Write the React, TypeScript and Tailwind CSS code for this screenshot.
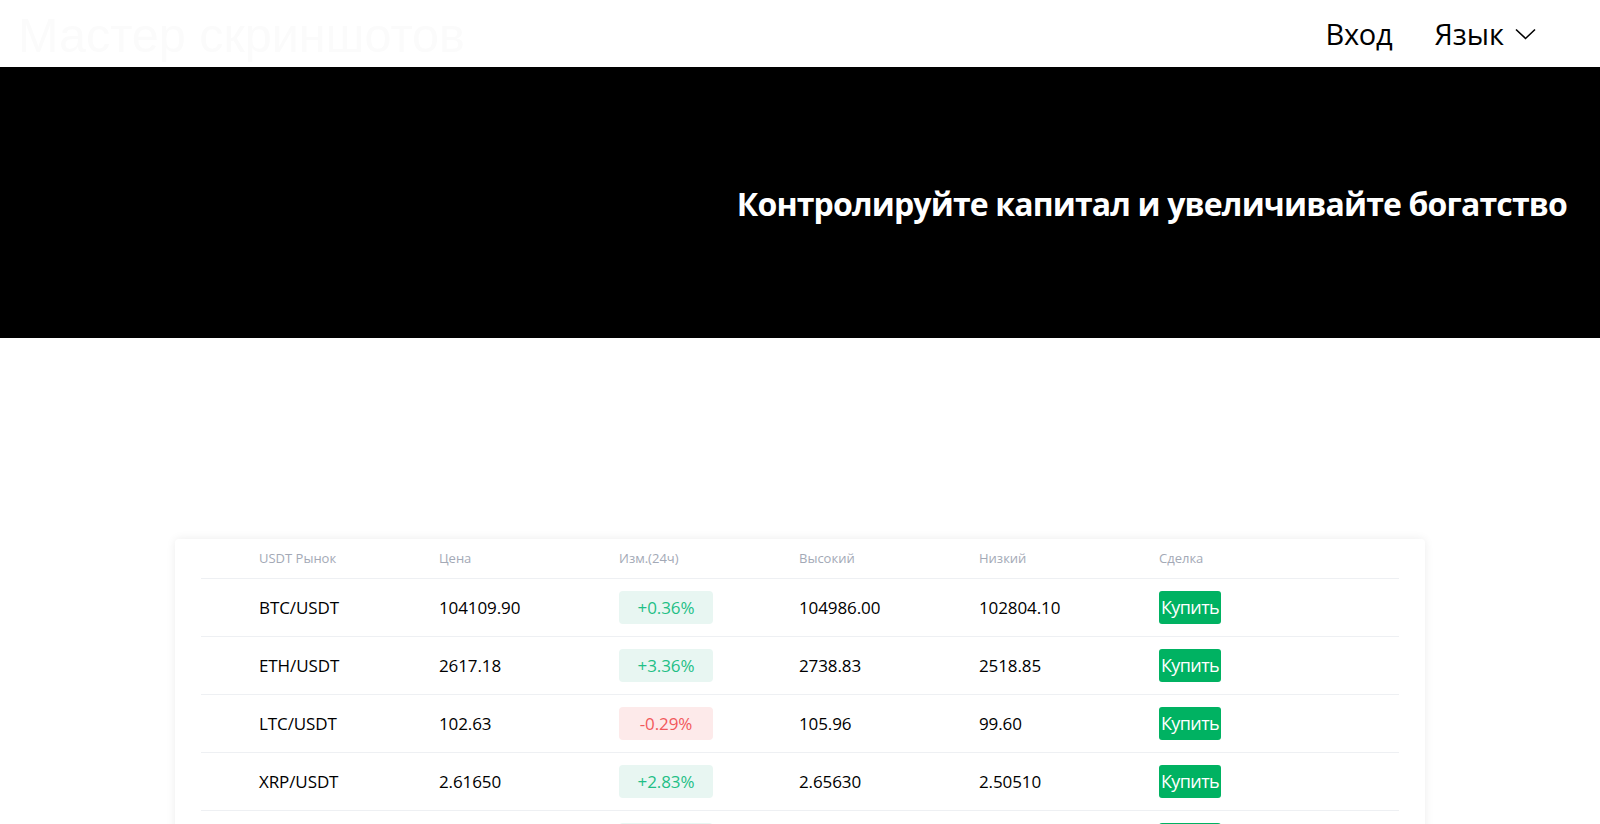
const rows = [
  { pair: "BTC/USDT", price: "104109.90", change: "+0.36%", high: "104986.00", low: "102804.10" },
  { pair: "ETH/USDT", price: "2617.18", change: "+3.36%", high: "2738.83", low: "2518.85" },
  { pair: "LTC/USDT", price: "102.63", change: "-0.29%", high: "105.96", low: "99.60" },
  { pair: "XRP/USDT", price: "2.61650", change: "+2.83%", high: "2.65630", low: "2.50510" },
  { pair: "EOS/USDT", price: "0.80500", change: "+1.12%", high: "0.82100", low: "0.78900" },
];

function ChevronDown() {
  return (
    <svg width="21" height="12" viewBox="0 0 21 12" fill="none" stroke="#000" strokeWidth="1.6">
      <path d="M1 1.5l9.5 9 9.5-9" />
    </svg>
  );
}

export default function App() {
  return (
    <div className="min-h-screen bg-white font-['Open_Sans',sans-serif] text-black">
      <header className="flex h-[67px] items-center justify-between pl-[18px] pr-[64px]">
        <div className="pt-[4px] font-['Liberation_Sans',sans-serif] text-[48.5px] leading-none text-[#fbfbfb]">Мастер скриншотов</div>
        <nav className="flex items-center text-[29px]">
          <a className="mr-[42px] tracking-[-0.3px]">Вход</a>
          <button className="flex items-center gap-[11px]">
            Язык
            <ChevronDown />
          </button>
        </nav>
      </header>

      <section className="flex h-[271px] items-center justify-end bg-black pr-[33px]">
        <h1 className="pt-[3px] text-[32px] font-bold tracking-[-0.85px] text-white">
          Контролируйте капитал и увеличивайте богатство
        </h1>
      </section>

      <div className="h-[201px]" />

      <div className="mx-auto w-[1250px] rounded-[4px] bg-white px-[26px] shadow-[0_0_10px_rgba(0,0,0,0.08)]">
        <div className="grid h-[40px] grid-cols-[180px_180px_180px_180px_180px_1fr] items-center border-b border-[#eef0f3] pl-[58px] text-[13px] text-[#a3a9b6]">
          <div>USDT Рынок</div>
          <div>Цена</div>
          <div>Изм.(24ч)</div>
          <div>Высокий</div>
          <div>Низкий</div>
          <div>Сделка</div>
        </div>
        {rows.map((r) => {
          const up = r.change.startsWith("+");
          return (
            <div
              key={r.pair}
              className="grid h-[58px] grid-cols-[180px_180px_180px_180px_180px_1fr] items-center border-b border-[#eef0f3] pl-[58px] text-[17px] tracking-[-0.1px]"
            >
              <div>{r.pair}</div>
              <div>{r.price}</div>
              <div>
                <span
                  className={
                    up
                      ? "flex h-[33px] w-[94px] items-center justify-center rounded-[4px] bg-[#e8f6f2] text-[#1fbf86]"
                      : "flex h-[33px] w-[94px] items-center justify-center rounded-[4px] bg-[#fdeaea] text-[#f2595b]"
                  }
                >
                  {r.change}
                </span>
              </div>
              <div>{r.high}</div>
              <div>{r.low}</div>
              <div>
                <button className="flex h-[33px] w-[62px] items-center justify-center rounded-[3px] bg-[#00b262] text-[18px] tracking-[-0.6px] text-white">
                  Купить
                </button>
              </div>
            </div>
          );
        })}
      </div>
      <div className="h-[40px]" />
    </div>
  );
}
